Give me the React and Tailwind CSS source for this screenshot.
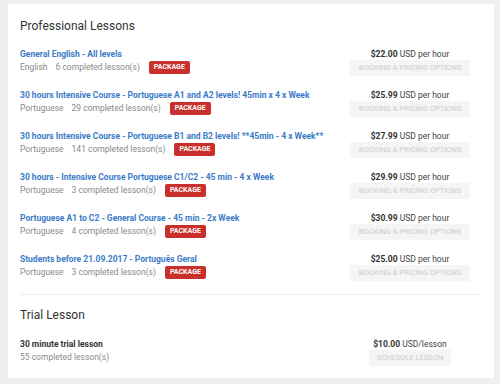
import React from "react";

const lessons = [
  {
    title: "General English - All levels",
    language: "English",
    completed: 6,
    price: "$22.00",
  },
  {
    title: "30 hours Intensive Course - Portuguese A1 and A2 levels! 45min x 4 x Week",
    language: "Portuguese",
    completed: 29,
    price: "$25.99",
  },
  {
    title: "30 hours Intensive Course - Portuguese B1 and B2 levels! **45min - 4 x Week**",
    language: "Portuguese",
    completed: 141,
    price: "$27.99",
  },
  {
    title: "30 hours - Intensive Course Portuguese C1/C2 - 45 min - 4 x Week",
    language: "Portuguese",
    completed: 3,
    price: "$29.99",
  },
  {
    title: "Portuguese A1 to C2 - General Course - 45 min - 2x Week",
    language: "Portuguese",
    completed: 4,
    price: "$30.99",
  },
  {
    title: "Students before 21.09.2017 - Português Geral",
    language: "Portuguese",
    completed: 3,
    price: "$25.00",
  },
];

function LessonRow({ lesson }) {
  return (
    <div className="flex justify-between items-start mb-[13px]">
      <div className="min-w-0">
        <div className="h-[12px] leading-[12px] text-[8.5px] font-bold text-[#3a7bc8] whitespace-nowrap">
          {lesson.title}
        </div>
        <div className="flex items-center h-[13px] mt-px text-[8.5px] text-[#8a8a8a]">
          <span>{lesson.language}</span>
          <span className="ml-2">{lesson.completed} completed lesson(s)</span>
          <span className="ml-[9px] h-[13px] px-[5px] flex items-center bg-[#c9302c] text-white text-[7px] font-bold rounded-[2px]">
            PACKAGE
          </span>
        </div>
      </div>
      <div className="w-[120px] mr-3 flex flex-col items-center shrink-0">
        <div className="h-[12px] leading-[12px] text-[8.5px] text-[#444] whitespace-nowrap">
          <span className="font-bold text-[#333]">{lesson.price}</span> USD per hour
        </div>
        <div className="w-[120px] h-[16px] flex items-center justify-center bg-[#f5f5f5] text-[#cdcdcd] text-[7.5px] whitespace-nowrap">
          BOOKING &amp; PRICING OPTIONS
        </div>
      </div>
    </div>
  );
}

export default function App() {
  return (
    <div
      className="w-[500px] h-[384px] bg-[#efefef] pt-1 pl-2 overflow-hidden"
      style={{ fontFamily: "Roboto, 'Liberation Sans', sans-serif" }}
    >
      <div className="w-[486px] bg-white px-3 pt-[14px] pb-[12px]">
        <h2 className="h-4 leading-4 text-[12px] text-[#333]">Professional Lessons</h2>
        <div className="mt-[14px]">
          {lessons.map((lesson) => (
            <LessonRow key={lesson.title} lesson={lesson} />
          ))}
        </div>
        <div className="border-t border-[#eeeeee] mt-[11px]" />
        <h2 className="h-4 leading-4 text-[12px] text-[#333] mt-3">Trial Lesson</h2>
        <div className="flex justify-between items-start mt-[15px]">
          <div>
            <div className="h-[12px] leading-[12px] text-[8.5px] font-bold text-[#333]">
              30 minute trial lesson
            </div>
            <div className="h-[13px] leading-[13px] mt-px text-[8.5px] text-[#8a8a8a]">
              55 completed lesson(s)
            </div>
          </div>
          <div className="w-[120px] mr-3 flex flex-col items-center">
            <div className="h-[12px] leading-[12px] text-[8.5px] text-[#444]">
              <span className="font-bold text-[#333]">$10.00</span> USD/lesson
            </div>
            <div className="w-[82px] h-[16px] flex items-center justify-center bg-[#f5f5f5] text-[#cdcdcd] text-[7.5px]">
              SCHEDULE LESSON
            </div>
          </div>
        </div>
      </div>
    </div>
  );
}
